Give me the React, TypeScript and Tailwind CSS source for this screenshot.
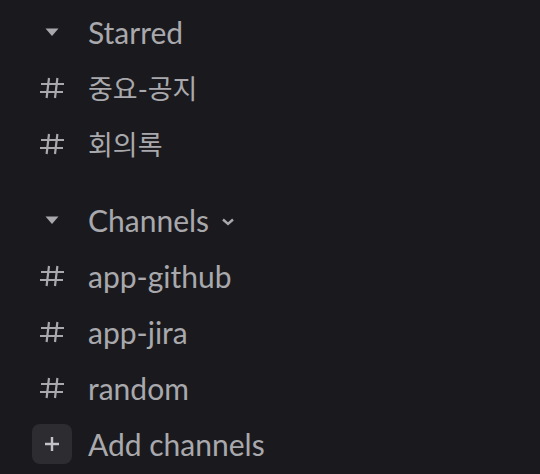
import { ReactNode } from "react";

function Caret() {
  return (
    <svg width="16" height="10" viewBox="0 0 16 10" className="text-[#a9a9ad]">
      <path d="M1.5 1.5h13L8 9z" fill="currentColor" />
    </svg>
  );
}

function Hash() {
  return (
    <svg width="26" height="22" viewBox="0 0 26 22" fill="none" stroke="currentColor" strokeWidth="2.2" className="text-[#a9a9ad]">
      <path d="M10 1 7.6 21M18.4 1 16 21M2 7h23M1 15h23" />
    </svg>
  );
}

function Row({ icon, children }: { icon: ReactNode; children: ReactNode }) {
  return (
    <div className="h-14 flex items-center">
      <div className="w-10 h-10 flex items-center justify-center shrink-0">{icon}</div>
      <div className="ml-4 flex items-center">{children}</div>
    </div>
  );
}

export default function App() {
  const starred = ["중요-공지", "회의록"];
  const channels = ["app-github", "app-jira", "random"];

  return (
    <div
      className="w-[540px] h-[474px] bg-[#1a1a1e] text-[#a9a9ad] pl-8 pt-[4px] overflow-hidden text-[30px] leading-none"
      style={{ fontFamily: "Lato, 'Noto Sans CJK KR', sans-serif" }}
    >
      <Row icon={<Caret />}>Starred</Row>
      {starred.map((c) => (
        <Row key={c} icon={<Hash />}>
          <span className="text-[27px]">{c}</span>
        </Row>
      ))}

      <div className="h-5" />

      <Row icon={<Caret />}>
        Channels
        <svg width="14" height="8" viewBox="0 0 14 8" fill="none" stroke="currentColor" strokeWidth="2.4" className="ml-3 mt-1">
          <path d="M2 1.5 7 6l5-4.5" />
        </svg>
      </Row>
      {channels.map((c) => (
        <Row key={c} icon={<Hash />}>
          {c}
        </Row>
      ))}

      <Row
        icon={
          <div className="w-10 h-10 rounded-lg bg-[#2c2c31] flex items-center justify-center">
            <svg width="16" height="16" viewBox="0 0 16 16" stroke="#c4c4c7" strokeWidth="2.4">
              <path d="M8 1v14M1 8h14" />
            </svg>
          </div>
        }
      >
        Add channels
      </Row>
    </div>
  );
}
